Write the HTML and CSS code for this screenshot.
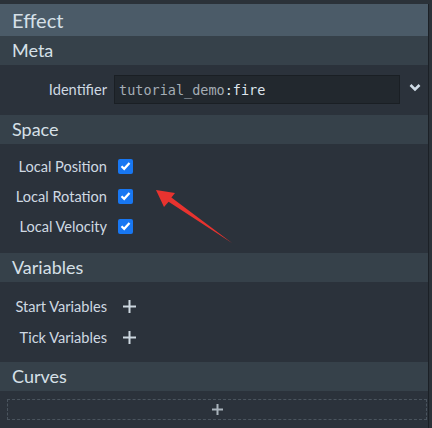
FILE: index.html
```html
<!DOCTYPE html>
<html lang="en">
  <head>
    <meta charset="UTF-8" />
    <meta name="viewport" content="width=device-width, initial-scale=1.0" />
    <title>Effect</title>
    <link rel="stylesheet" href="styles.css">
  </head>
  <body>
    <div class="panel">
      <div class="title">Effect</div>

      <div class="section-head">Meta</div>
      <div class="section meta">
        <div class="row">
          <span class="label">Identifier</span>
          <div class="field">
            <span class="ns">tutorial_demo</span><span class="id">:fire</span>
          </div>
          <svg class="chevron" width="12" height="9" viewBox="0 0 12 9">
            <path d="M1.5 2 L6 6.5 L10.5 2" fill="none" stroke="#cfdbe6" stroke-width="2.6" />
          </svg>
        </div>
      </div>

      <div class="section-head">Space</div>
      <div class="section space">
        <div class="row">
          <span class="label">Local Position</span>
          <span class="check">
            <svg width="11" height="10" viewBox="0 0 11 10"><path d="M1.5 5.2 L4.2 7.8 L9.5 2" fill="none" stroke="#fff" stroke-width="2.2" /></svg>
          </span>
        </div>
        <div class="row">
          <span class="label">Local Rotation</span>
          <span class="check">
            <svg width="11" height="10" viewBox="0 0 11 10"><path d="M1.5 5.2 L4.2 7.8 L9.5 2" fill="none" stroke="#fff" stroke-width="2.2" /></svg>
          </span>
        </div>
        <div class="row">
          <span class="label">Local Velocity</span>
          <span class="check">
            <svg width="11" height="10" viewBox="0 0 11 10"><path d="M1.5 5.2 L4.2 7.8 L9.5 2" fill="none" stroke="#fff" stroke-width="2.2" /></svg>
          </span>
        </div>
      </div>

      <div class="section-head">Variables</div>
      <div class="section vars">
        <div class="row">
          <span class="label">Start Variables</span>
          <svg class="plus" width="13" height="13" viewBox="0 0 13 13"><path d="M6.5 0 V13 M0 6.5 H13" stroke="#cdd7e0" stroke-width="2" /></svg>
        </div>
        <div class="row">
          <span class="label">Tick Variables</span>
          <svg class="plus" width="13" height="13" viewBox="0 0 13 13"><path d="M6.5 0 V13 M0 6.5 H13" stroke="#cdd7e0" stroke-width="2" /></svg>
        </div>
      </div>

      <div class="section-head">Curves</div>
      <div class="section curves">
        <div class="add-box">
          <svg width="11" height="11" viewBox="0 0 11 11"><path d="M5.5 0 V11 M0 5.5 H11" stroke="#a9b3bc" stroke-width="2" /></svg>
        </div>
      </div>
    </div>

    <!-- arrow drawn over the panel -->
    <svg class="arrow" width="432" height="428" viewBox="0 0 432 428">
      <polygon points="156,190 175,193 171.4,197.6 232,243 168.6,201.8 164,207" fill="#e8332f" />
    </svg>
  </body>
</html>
```

FILE: styles.css
```css
* {
  box-sizing: border-box;
  margin: 0;
  padding: 0;
}

html,
body {
  width: 432px;
  height: 428px;
  overflow: hidden;
}

body {
  position: relative;
  background-color: #2b3239;
  font-family: Lato, "Noto Sans", sans-serif;
  color: #cfd9e2;
  padding-top: 4px;
}

.panel {
  width: 429px;
  height: 424px;
  background-color: #2b323b;
  border-right: 1px solid #1b2026;
}

.title {
  height: 32px;
  display: flex;
  align-items: center;
  padding-left: 12px;
  padding-bottom: 1px;
  font-size: 20px;
  background-color: #4b5b68;
  color: #d6e0e8;
}

.section-head {
  height: 29px;
  display: flex;
  align-items: center;
  padding-left: 12px;
  padding-bottom: 2px;
  font-size: 18px;
  background-color: #36414a;
  color: #d6e0e8;
}

.section {
  display: flex;
  flex-direction: column;
}

.row {
  display: flex;
  align-items: center;
  gap: 11px;
}

.label {
  width: 107px;
  text-align: right;
  font-size: 14.6px;
  white-space: nowrap;
}

.meta {
  height: 50px;
  padding-top: 10px;
}

.meta .row {
  gap: 7px;
}

.field {
  width: 286px;
  height: 29px;
  display: flex;
  align-items: center;
  padding-left: 4px;
  background-color: #22282e;
  border: 1px solid #1a1f24;
  font-family: "DejaVu Sans Mono", monospace;
  font-size: 13.5px;
}

.ns {
  color: #a4adb5;
}

.id {
  color: #dde5ec;
}

.chevron {
  margin-left: 2px;
  margin-top: -4px;
}

.space {
  height: 109px;
  padding-top: 7px;
}

.space .row {
  height: 30px;
}

.check {
  width: 15px;
  height: 15px;
  border-radius: 2px;
  background-color: #1877f2;
  display: flex;
  align-items: center;
  justify-content: center;
}

.vars {
  height: 80px;
  padding-top: 9px;
}

.vars .row {
  height: 31px;
  gap: 16px;
}

.curves {
  padding: 8px 1px 0 7px;
}

.add-box {
  height: 21px;
  display: flex;
  align-items: center;
  justify-content: center;
  border: 1px dashed #4a545e;
}

.arrow {
  position: absolute;
  left: 0;
  top: 0;
  pointer-events: none;
}
```
